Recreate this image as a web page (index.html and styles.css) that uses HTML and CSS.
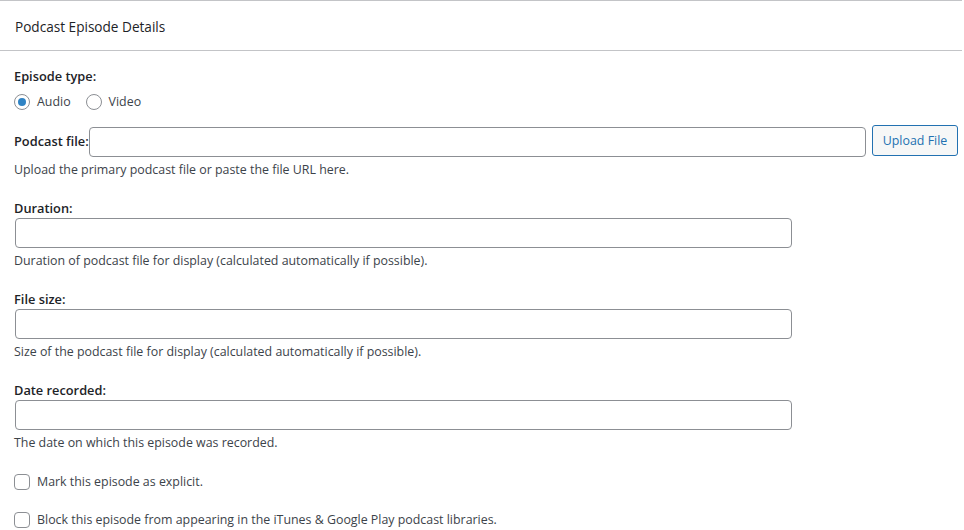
FILE: index.html
```html
<!DOCTYPE html>
<html>
<head>
<meta charset="utf-8">
<link rel="stylesheet" href="styles.css">
</head>
<body>
<div class="box">
  <div class="head">Podcast Episode Details</div>
  <div class="inside">
    <div class="label first">Episode type:</div>
    <div class="radios">
      <label class="opt"><input type="radio" name="t" class="radio" checked><span>Audio</span></label>
      <label class="opt"><input type="radio" name="t" class="radio"><span>Video</span></label>
    </div>
    <div class="filerow">
      <span class="label inline">Podcast file:</span>
      <input type="text" class="field file">
      <button class="btn">Upload File</button>
    </div>
    <div class="desc d1">Upload the primary podcast file or paste the file URL here.</div>

    <div class="section">
      <div class="label">Duration:</div>
      <input type="text" class="field wide">
      <div class="desc">Duration of podcast file for display (calculated automatically if possible).</div>
    </div>
    <div class="section">
      <div class="label">File size:</div>
      <input type="text" class="field wide">
      <div class="desc">Size of the podcast file for display (calculated automatically if possible).</div>
    </div>
    <div class="section">
      <div class="label">Date recorded:</div>
      <input type="text" class="field wide">
      <div class="desc">The date on which this episode was recorded.</div>
    </div>

    <label class="check c1"><input type="checkbox" class="cb"><span>Mark this episode as explicit.</span></label>
    <label class="check c2"><input type="checkbox" class="cb"><span>Block this episode from appearing in the iTunes &amp; Google Play podcast libraries.</span></label>
  </div>
</div>
</body>
</html>
```

FILE: styles.css
```css
html, body {
  margin: 0;
  padding: 0;
  background: #fff;
}
body {
  font-family: "Open Sans", "Noto Sans", sans-serif;
  font-size: 12.4px;
  color: #3c434a;
}
.box {
  width: 962px;
  border-top: 1px solid #c3c4c7;
  height: 529px;
  overflow: hidden;
}
.head {
  height: 49px;
  line-height: 51px;
  border-bottom: 1px solid #c3c4c7;
  padding-left: 15px;
  font-size: 13.6px;
  color: #1d2327;
}
.inside {
  padding: 0 0 0 14px;
}
.label {
  font-weight: 600;
  font-size: 12.8px;
  color: #1d2327;
  line-height: 20px;
  height: 18px;
  white-space: nowrap;
}
.inline {
  flex: none;
  width: 75px;
  line-height: 18px;
  margin-top: 1px;
}
.first {
  margin-top: 15px;
}
.radios {
  display: flex;
  gap: 15px;
  margin-top: 9px;
  height: 18px;
}
.opt, .check {
  display: flex;
  align-items: center;
  gap: 7px;
  line-height: 18px;
  white-space: nowrap;
}
.radio, .cb {
  appearance: none;
  -webkit-appearance: none;
  margin: 0;
  width: 16px;
  height: 16px;
  border: 1px solid #8c8f94;
  background: #fff;
  box-sizing: border-box;
  flex: none;
}
.radio {
  border-radius: 50%;
  position: relative;
}
.radio:checked::before {
  content: "";
  position: absolute;
  left: 3px;
  top: 3px;
  width: 8px;
  height: 8px;
  border-radius: 50%;
  background: #2f83c4;
}
.cb {
  border-radius: 4px;
}
.filerow {
  display: flex;
  align-items: center;
  margin-top: 14px;
  height: 31px;
}
.field {
  box-sizing: border-box;
  height: 30px;
  border: 1px solid #8c8f94;
  border-radius: 4px;
  background: #fff;
  margin: 0;
  padding: 0 8px;
  font: inherit;
}
.file {
  flex: none;
  width: 777px;
  margin-top: 2px;
}
.btn {
  flex: none;
  box-sizing: border-box;
  margin-left: 6px;
  width: 86px;
  height: 31px;
  border: 1px solid #2271b1;
  border-radius: 3px;
  background: #f6f7f7;
  color: #2271b1;
  font: inherit;
  padding: 0;
  margin-top: -1px;
}
.desc {
  line-height: 20px;
  height: 18px;
  margin-top: 3px;
}
.d1 {
  margin-top: 4px;
}
.section {
  margin-top: 20px;
}
.section .field {
  display: block;
  margin-top: 2px;
  width: 777px;
  margin-left: 1px;
}
.check {
  height: 18px;
}
.c1 {
  margin-top: 22px;
}
.c2 {
  margin-top: 20px;
}
```
